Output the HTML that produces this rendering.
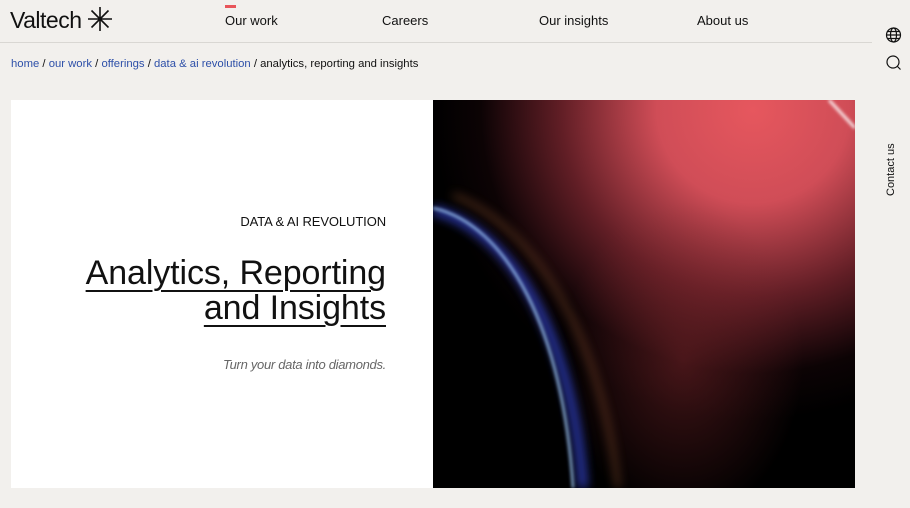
<!DOCTYPE html>
<html><head><meta charset="utf-8"><style>
*{margin:0;padding:0;box-sizing:border-box}
body{width:910px;height:508px;background:#f2f0ed;font-family:"Liberation Sans",sans-serif;position:relative;overflow:hidden;color:#111}
.logo{position:absolute;left:10px;top:6px;font-size:23px;font-weight:300;letter-spacing:-0.5px}
.nav{position:absolute;top:13px;font-size:13px}
.hl{position:absolute;left:0;top:42px;width:872px;height:1px;background:#d9d7d3}
.bc{position:absolute;left:11px;top:58px;font-size:11.3px}
.bc a{color:#2d4fa8;text-decoration:none}
.white{position:absolute;left:11px;top:100px;width:422px;height:388px;background:#fff}
.img{position:absolute;left:433px;top:100px;width:422px;height:388px;background:#000;overflow:hidden}
.kick{position:absolute;right:524px;top:214px;font-size:13px;text-align:right;letter-spacing:-0.1px}
.title{position:absolute;right:524px;top:256px;font-size:34px;font-weight:300;line-height:35px;text-align:right;letter-spacing:-0.1px}
.title span{text-decoration:underline;text-decoration-thickness:2px;text-underline-offset:6px}
.sub{position:absolute;right:524px;top:357px;font-size:13px;font-style:italic;color:#666;letter-spacing:-0.3px}
.contact{position:absolute;left:885px;top:196px;transform:rotate(-90deg);transform-origin:0 0;font-size:11px;white-space:nowrap}
.g{position:absolute;border-radius:50%}
</style></head><body>
<div class="logo">Valtech <svg width="26" height="26" viewBox="0 0 26 26" style="vertical-align:-4px" stroke="#111" stroke-width="1.6" fill="none"><path d="M13 1v24M1 13h24M4.5 4.5l17 17M21.5 4.5l-17 17"/></svg></div>
<div style="position:absolute;left:225px;top:5px;width:11px;height:3px;background:#e8555a"></div>
<div class="nav" style="left:225px">Our work</div>
<div class="nav" style="left:382px">Careers</div>
<div class="nav" style="left:539px">Our insights</div>
<div class="nav" style="left:697px">About us</div>
<div class="hl"></div>
<svg style="position:absolute;left:885px;top:27px" width="17" height="16" viewBox="0 0 17 16" fill="none" stroke="#111" stroke-width="1.2"><circle cx="8.5" cy="8" r="7"/><ellipse cx="8.5" cy="8" rx="3" ry="7"/><path d="M1.5 8h14M2.5 4.5h12M2.5 11.5h12"/></svg>
<svg style="position:absolute;left:886px;top:55px" width="16" height="16" viewBox="0 0 16 16" fill="none" stroke="#111" stroke-width="1.2"><circle cx="7" cy="7" r="6"/><path d="M11 11l3.5 3.5"/></svg>
<div class="contact">Contact us</div>
<div class="bc"><a>home</a> / <a>our work</a> / <a>offerings</a> / <a>data &amp; ai revolution</a> / analytics, reporting and insights</div>
<div class="white"></div>
<div class="kick">DATA &amp; AI REVOLUTION</div>
<div class="title"><span>Analytics, Reporting</span><br><span>and Insights</span></div>
<div class="sub">Turn your data into diamonds.</div>
<div class="img">
<div class="g" style="left:0px;top:-300px;width:640px;height:620px;background:radial-gradient(closest-side,#e6575e 0%,#d04d57 30%,rgba(130,40,50,.75) 60%,rgba(40,10,15,.3) 85%,rgba(0,0,0,0) 100%)"></div>
<div class="g" style="left:130px;top:100px;width:240px;height:320px;background:radial-gradient(closest-side,rgba(130,40,45,.5),rgba(0,0,0,0))"></div>
<svg style="position:absolute;left:0;top:0" width="422" height="388">
<defs>
<filter id="b" x="-50%" y="-50%" width="200%" height="200%"><feGaussianBlur stdDeviation="1.5"/></filter>
<filter id="m" x="-50%" y="-50%" width="200%" height="200%"><feGaussianBlur stdDeviation="5"/></filter>
</defs>
<path d="M0 110 C80 130 140 240 150 388" stroke="#3040c0" stroke-width="9" fill="none" filter="url(#m)" opacity=".9"/>
<path d="M0 108 C75 125 130 230 140 388" stroke="#a8d4ff" stroke-width="2" fill="none" filter="url(#b)"/>
<path d="M20 95 C110 130 170 250 185 388" stroke="#c07040" stroke-width="4" fill="none" filter="url(#m)" opacity=".5"/>
<path d="M396 0 L422 28" stroke="#fff" stroke-width="2.5" filter="url(#b)"/>
</svg>
</div>
</body></html>
